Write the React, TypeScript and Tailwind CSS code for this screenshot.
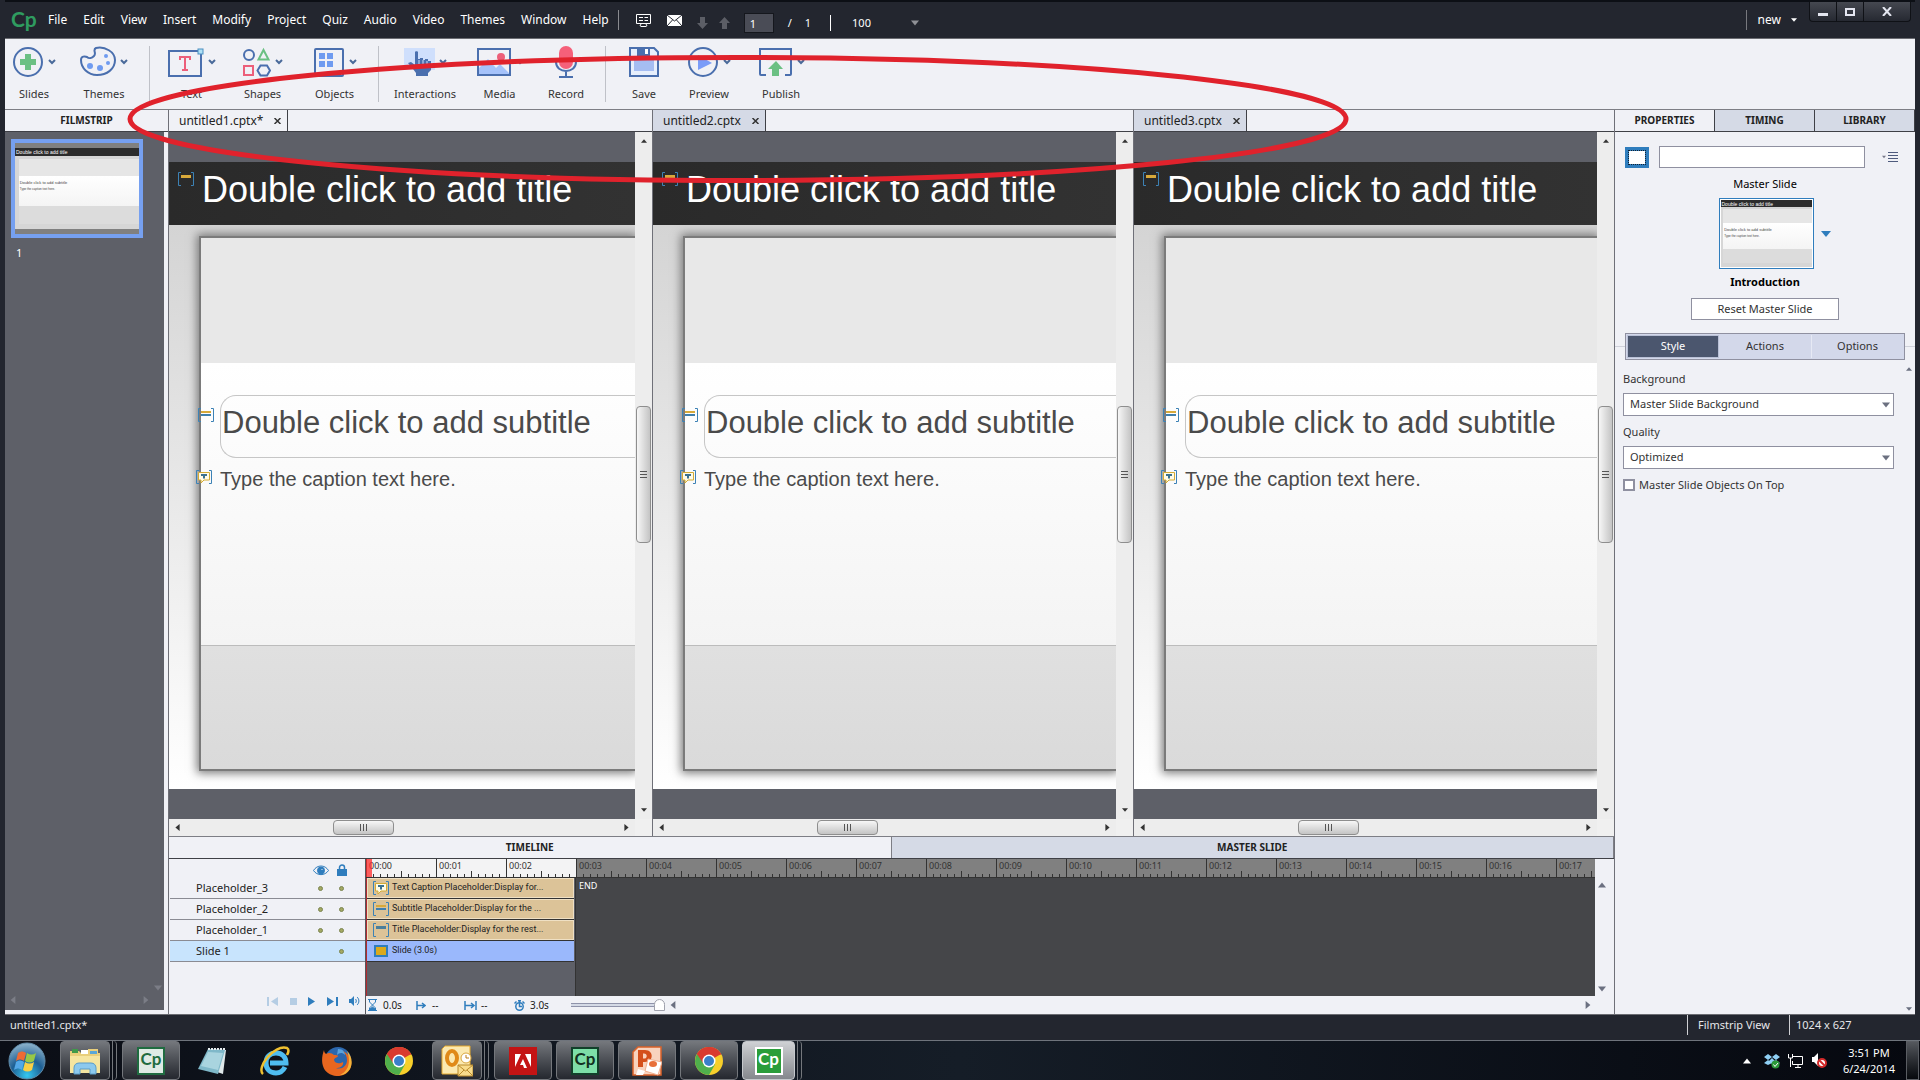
import React, { useState } from 'react';

const menus = ['File', 'Edit', 'View', 'Insert', 'Modify', 'Project', 'Quiz', 'Audio', 'Video', 'Themes', 'Window', 'Help'];

const documents = [
  { name: 'untitled1.cptx*', active: true },
  { name: 'untitled2.cptx', active: false },
  { name: 'untitled3.cptx', active: false },
];

const seconds = Array.from({ length: 18 }, (_, i) => `00:${String(i).padStart(2, '0')}`);

/* ---------- toolbar icons ---------- */

const SlidesIcon = () => (
  <svg className="h-8 w-8" viewBox="0 0 32 32" fill="none">
    <circle cx="16" cy="16" r="14" stroke="#4a6fae" strokeWidth="2" />
    <path d="M13 8h6v5h5v6h-5v5h-6v-5H8v-6h5z" fill="#6bc083" />
  </svg>
);

const ThemesIcon = () => (
  <svg className="h-8 w-9" viewBox="0 0 36 32" fill="none">
    <path
      d="M14 10c3-3-2-6 2-8 9-2 19 4 19 12 0 9-8 15-18 15C8 29 1 22 1 14c0-4 4-4 6-3 2 2 5 1 7-1z"
      stroke="#4a6fae"
      strokeWidth="2"
    />
    <g fill="#6f9bf0">
      <circle cx="10" cy="20" r="3" />
      <circle cx="20" cy="22" r="3" />
      <circle cx="28" cy="17" r="2" />
      <circle cx="26" cy="10" r="2" />
    </g>
  </svg>
);

const TextIcon = () => (
  <svg className="h-8 w-9" viewBox="0 0 36 32" fill="none">
    <rect x="1" y="5" width="32" height="25" stroke="#4a6fae" strokeWidth="2" />
    <path d="M11 10h12v4h-2v-2h-3v11h2v2h-6v-2h2V12h-3v2h-2z" fill="#ec5f7a" />
    <rect x="30" y="3" width="5" height="5" fill="#aee0f5" stroke="#4a8fc0" />
  </svg>
);

const ShapesIcon = () => (
  <svg className="h-8 w-7" viewBox="0 0 28 32" fill="none" strokeWidth="2">
    <circle cx="6" cy="9" r="5" stroke="#4a6fae" />
    <path d="M20.500 4l5 9.500h-10z" stroke="#6bc083" />
    <rect x="1" y="20" width="9" height="9" stroke="#ec5f7a" />
    <path d="M17.500 19.500h6.500l3 5-3 5h-6.500l-3-5z" stroke="#4a6fae" />
  </svg>
);

const ObjectsIcon = () => (
  <svg className="h-8 w-8" viewBox="0 0 32 32" fill="none">
    <rect x="2" y="3" width="28" height="27" rx="1" stroke="#4a6fae" strokeWidth="2" />
    <path d="M6 7h6v6H6zM14 7h6v6h-6zM6 15h6v6H6zM14 15h6v6h-6z" fill="#6f9bf0" />
  </svg>
);

const InteractionsIcon = () => (
  <svg className="h-8 w-8" viewBox="0 0 32 32" fill="none">
    <rect x="1" y="2" width="31" height="22" fill="#cfdffc" />
    <path
      d="M12 6c0-1 3-1 3 0v7h2v-1h3v2h2v-1h3v2h3v9l-3 3v3H13v-3l-3-4-5-6 3-1 4 3z"
      fill="#4a6fae"
    />
    <path d="M16 14v4M20 14v4M24 15v3" stroke="#cfdffc" />
  </svg>
);

const MediaIcon = () => (
  <svg className="h-8 w-9" viewBox="0 0 36 32" fill="none">
    <rect x="2" y="3" width="32" height="26" stroke="#4a6fae" strokeWidth="2" />
    <path d="M3 27V22l9-9 8 9 4-4 9 9v1H3z" fill="#a5c2fa" />
    <circle cx="25" cy="11" r="4" fill="#ec5f7a" />
  </svg>
);

const RecordIcon = () => (
  <svg className="h-8 w-6" viewBox="0 0 24 32" fill="none">
    <rect x="5" y="0" width="14" height="23" rx="7" fill="#f5607a" />
    <path d="M2 14v2c0 12 20 12 20 0v-2M12 25v6M5 31h14" stroke="#4a6fae" strokeWidth="2" />
  </svg>
);

const SaveIcon = () => (
  <svg className="h-8 w-8" viewBox="0 0 32 32" fill="none">
    <path d="M2 2h24l4 4v24H2z" fill="#e7effc" stroke="#4a6fae" strokeWidth="2" />
    <path d="M9 2h13v8H9z" fill="#4a6fae" />
    <path d="M17 3h3v5h-3z" fill="#fff" />
    <path d="M6 14h20v11H6z" fill="#a5bdf2" />
  </svg>
);

const PreviewIcon = () => (
  <svg className="h-8 w-8" viewBox="0 0 32 32" fill="none">
    <circle cx="16" cy="16" r="14" stroke="#4a6fae" strokeWidth="2" />
    <path d="M11 9l14 8-14 7z" fill="#7a9cf8" />
  </svg>
);

const PublishIcon = () => (
  <svg className="h-8 w-9" viewBox="0 0 36 32" fill="none">
    <path d="M9 29H4a1 1 0 01-1-1V3h31v25a1 1 0 01-1 1h-5" stroke="#4a6fae" strokeWidth="2" />
    <path d="M19 15l7 8h-4v7h-7v-7h-4z" fill="#6bc083" />
  </svg>
);

const toolGroups = [
  [
    { label: 'Slides', icon: SlidesIcon, menu: true, width: 'w-[58px]' },
    { label: 'Themes', icon: ThemesIcon, menu: true, width: 'w-[82px]' },
  ],
  [
    { label: 'Text', icon: TextIcon, menu: true, width: 'w-[77px]' },
    { label: 'Shapes', icon: ShapesIcon, menu: true, width: 'w-[65px]' },
    { label: 'Objects', icon: ObjectsIcon, menu: true, width: 'w-[79px]' },
  ],
  [
    { label: 'Interactions', icon: InteractionsIcon, menu: true, width: 'w-[86px]' },
    { label: 'Media', icon: MediaIcon, menu: true, width: 'w-[63px]' },
    { label: 'Record', icon: RecordIcon, menu: false, width: 'w-[70px]' },
  ],
  [
    { label: 'Save', icon: SaveIcon, menu: false, width: 'w-[70px]' },
    { label: 'Preview', icon: PreviewIcon, menu: true, width: 'w-[60px]' },
    { label: 'Publish', icon: PublishIcon, menu: true, width: 'w-[84px]' },
  ],
];

/* ---------- small shared pieces ---------- */

const Triangle = ({ dir, className }: { dir: 'up' | 'down' | 'left' | 'right'; className: string }) => {
  const d = { up: 'M0 8l5-6 5 6z', down: 'M0 2l5 6 5-6z', left: 'M8 0L2 5l6 5z', right: 'M2 0l6 5-6 5z' }[dir];
  return (
    <svg className={className} viewBox="0 0 10 10" fill="currentColor">
      <path d={d} />
    </svg>
  );
};

const PlaceholderIcon = ({ kind, light }: { kind: 'title' | 'subtitle' | 'caption'; light?: boolean }) => (
  <svg className="h-[14px] w-4 shrink-0" viewBox="0 0 16 14" fill="none">
    <path d="M3 .5H.5v13H3M13 .5h2.500v13H13" stroke="#3d82b5" />
    {kind === 'title' && <path d="M3 3h10v3H3z" fill={light ? '#d8a93a' : '#4a7f9c'} />}
    {kind === 'subtitle' && (
      <>
        <path d="M3 3h10v2H3z" fill="#d8a93a" />
        <path d="M3 6h10v2H3z" fill="#3f7fae" />
      </>
    )}
    {kind === 'caption' && (
      <>
        <path d="M2.500 2.500h11v7.500H8l-3 3v-3H2.500z" fill="#fffbe6" stroke="#d3ab35" />
        <path d="M5 4h6v2H9v2.500H7V6H5z" fill="#3a7190" />
      </>
    )}
  </svg>
);

const tracks = [
  { name: 'Placeholder_3', kind: 'caption' as const, text: 'Text Caption Placeholder:Display for...' },
  { name: 'Placeholder_2', kind: 'subtitle' as const, text: 'Subtitle Placeholder:Display for the ...' },
  { name: 'Placeholder_1', kind: 'title' as const, text: 'Title Placeholder:Display for the rest...' },
];

const SlideThumb = () => (
  <div className="flex h-full flex-col bg-[#d6d6d6] font-['Liberation_Sans',sans-serif] text-[#444]">
    <div className="h-[10%] bg-[#2c2c2c] pl-px text-[5px] leading-[8px] text-white">Double click to add title</div>
    <div className="mt-[2%] ml-[3%] h-[22%] bg-[#e6e6e6]" />
    <div className="ml-[3%] flex-1 bg-gradient-to-b from-white to-[#f4f4f4] pt-1 pl-px">
      <p className="text-[4px] leading-[6px]">Double click to add subtitle</p>
      <p className="text-[3px] leading-[6px]">Type the caption text here.</p>
    </div>
    <div className="mb-[4%] ml-[3%] h-[22%] bg-[#dcdcdc]" />
  </div>
);

/* ---------- title bar ---------- */

const TitleBar = () => (
  <header className="flex h-[39px] items-center border-t-2 border-b border-t-[#0c0f15] border-b-[#6b6c72] text-[12px] text-white">
    <span className="w-[43px] pb-1 pl-[6px] font-['Lato',sans-serif] text-[21px] leading-none font-bold text-[#2f9c60]">Cp</span>
    <nav className="flex gap-4">
      {menus.map((m) => (
        <button key={m} type="button">{m}</button>
      ))}
    </nav>
    <span className="ml-[9px] h-5 w-px bg-[#8a8b90]" />
    <svg className="ml-[17px] h-[13px] w-[15px]" viewBox="0 0 15 13" fill="none" stroke="#fff">
      <path d="M.5.5h14v9H.5zM4.500 12.500h6M5 10l-1 2M10 10l1 2" />
      <path d="M3 3.500h4M8.500 3.500H12M3 6.500h4M8.500 6.500H12" />
    </svg>
    <svg className="ml-4 h-[11px] w-[15px]" viewBox="0 0 15 11">
      <path d="M0 0h15v11H0z" fill="#fff" />
      <path d="M0 0l7.500 6L15 0M0 11l5.500-6M15 11L9.500 5" fill="none" stroke="#23262f" />
    </svg>
    <div className="flex items-center pt-[6px] text-[11px]">
      <svg className="ml-[15px] h-3 w-[11px]" viewBox="0 0 11 12" fill="#5c5e66">
        <path d="M3 0h5v6h3l-5.500 6L0 6h3z" />
      </svg>
      <svg className="ml-[11px] h-3 w-[11px]" viewBox="0 0 11 12" fill="#5c5e66">
        <path d="M3 12h5V6h3L5.500 0 0 6h3z" />
      </svg>
      <input
        aria-label="Page"
        defaultValue="1"
        className="ml-[14px] h-[20px] w-[30px] border border-[#15171d] bg-[#4a4c56] pl-[5px] text-white"
      />
      <span className="ml-[14px]">/</span>
      <span className="ml-[13px]">1</span>
      <span className="ml-[19px] h-4 w-px bg-white" />
      <label className="ml-[21px] flex items-center">
        <input aria-label="Zoom" defaultValue="100" className="w-[59px] bg-transparent text-white" />
        <Triangle dir="down" className="h-2 w-2 text-[#8f9096]" />
      </label>
    </div>
    <span className="ml-auto h-5 w-px bg-[#77787e]" />
    <button type="button" className="flex items-center gap-[10px] pl-[11px]">
      new <Triangle dir="down" className="h-[6px] w-[6px]" />
    </button>
    <div className="mr-1 ml-[12px] flex h-[20px] self-start rounded-b border border-t-0 border-[#0f1116] bg-gradient-to-b from-[#454850] to-[#262932]">
      <button type="button" aria-label="Minimize" className="flex w-[27px] items-center justify-center border-r border-[#0f1116]">
        <span className="mt-[6px] h-[3px] w-[10px] bg-[#e4e6f0]" />
      </button>
      <button type="button" aria-label="Maximize" className="flex w-[27px] items-center justify-center border-r border-[#0f1116]">
        <span className="h-2 w-[10px] border-2 border-[#e4e6f0]" />
      </button>
      <button type="button" aria-label="Close" className="flex w-[46px] items-center justify-center">
        <svg className="h-[9px] w-[10px]" viewBox="0 0 10 9" stroke="#e4e6f0" strokeWidth="2">
          <path d="M1 0l8 9M9 0L1 9" />
        </svg>
      </button>
    </div>
  </header>
);

const Toolbar = () => (
  <div className="flex h-[71px] border-b border-[#7d7e85] bg-[#f0f1f6]">
    {toolGroups.map((group, i) => (
      <React.Fragment key={i}>
        {i > 0 && (
          <div className="flex w-2 justify-center py-[7px]">
            <span className="w-px bg-[#bfc1c8]" />
          </div>
        )}
        {group.map((tool) => (
          <button key={tool.label} type="button" className={`${tool.width} flex flex-col items-center gap-2 pt-[7px]`}>
            <span className="flex items-center gap-1">
              <tool.icon />
              {tool.menu && (
                <svg className="h-[6px] w-2" viewBox="0 0 8 6" fill="none" stroke="#4a6a9a" strokeWidth="2">
                  <path d="M1 1l3 3 3-3" />
                </svg>
              )}
            </span>
            <span className="text-[11px] leading-4 text-[#333]">{tool.label}</span>
          </button>
        ))}
      </React.Fragment>
    ))}
  </div>
);

/* ---------- filmstrip ---------- */

const Filmstrip = () => (
  <aside className="flex w-[164px] shrink-0 flex-col border-r border-[#6f7078] bg-[#f0f1f6]">
    <h2 className="h-[22px] border-b border-[#3f4046] text-center text-[10px] leading-[21px] font-bold text-[#222]">FILMSTRIP</h2>
    <div className="mr-1 mb-1 flex flex-1 flex-col bg-[#5e6068] pt-[7px] text-[#7b7d86]">
      <button type="button" aria-label="Slide 1" className="ml-[6px] h-[99px] w-[132px] border-4 border-[#76a0f0] bg-[#808080] py-[5px] text-left">
        <SlideThumb />
      </button>
      <span className="mt-[7px] ml-[11px] text-[11px] leading-4 text-white">1</span>
      <Triangle dir="down" className="mt-auto mr-[2px] h-2 w-2 self-end" />
      <div className="mt-1 mb-[6px] flex justify-between pr-[14px] pl-1">
        <Triangle dir="left" className="h-2 w-2" />
        <Triangle dir="right" className="h-2 w-2" />
      </div>
    </div>
  </aside>
);

/* ---------- documents ---------- */

const Slide = () => (
  <div className="flex h-[627px] flex-col font-['Liberation_Sans',sans-serif] whitespace-nowrap">
    <div className="flex h-[63px] shrink-0 gap-2 bg-gradient-to-r from-[#2a2a2a] to-[#323232] pl-[9px]">
      <span className="pt-[10px]">
        <PlaceholderIcon kind="title" light />
      </span>
      <p className="text-[36px] leading-[56px] text-white">Double click to add title</p>
    </div>
    <div className="flex-1 bg-gradient-to-b from-[#d4d4d4] to-white pt-[11px] pb-[18px] pl-[30px]">
      <div className="flex h-full flex-col border-2 border-r-0 border-[#7b7b7b] shadow-[0_0_9px_2px_#777]">
        <div className="h-[125px] bg-[#e8e8e8]" />
        <div className="flex-1 bg-gradient-to-b from-white to-[#f4f4f4] pt-[32px] text-[#4a4a4a]">
          <div className="-ml-[3px] flex gap-[6px]">
            <span className="pt-[13px]">
              <PlaceholderIcon kind="subtitle" />
            </span>
            <p className="h-[63px] flex-1 rounded-l-2xl border border-r-0 border-[#c6c6c6] pl-px text-[31px] leading-[54px]">
              Double click to add subtitle
            </p>
          </div>
          <div className="mt-[4px] -ml-[5px] flex gap-2">
            <span className="pt-[8px]">
              <PlaceholderIcon kind="caption" />
            </span>
            <p className="text-[20px] leading-[34px]">Type the caption text here.</p>
          </div>
        </div>
        <div className="h-[124px] border-t border-[#bcbcbc] bg-gradient-to-b from-[#e0e0e0] to-[#dadada]" />
      </div>
    </div>
  </div>
);

const DocumentPane = ({ name, active, last }: { name: string; active: boolean; last: boolean }) => (
  <section className={`flex min-w-0 flex-col ${last ? '' : 'border-r border-[#6f7078]'}`}>
    <div className="flex h-[22px] border-b border-[#3f4046]">
      <div className={`flex items-center border-r border-[#3f4046] pr-[6px] pl-[10px] text-[12px] text-[#222] ${active ? '' : 'bg-[#d5dae6]'}`}>
        <button type="button">{name}</button>
        <button type="button" aria-label={`Close ${name}`} className="ml-[11px]">
          <svg className="h-[6px] w-[7px]" viewBox="0 0 7 6" stroke="#333" strokeWidth="1.500">
            <path d="M.5 0l6 6M6.500 0l-6 6" />
          </svg>
        </button>
      </div>
    </div>
    <div className="grid flex-1 grid-cols-[minmax(0,1fr)_17px] grid-rows-[1fr_17px]">
      <div className="overflow-hidden bg-[#5e6068] py-[30px]">
        <Slide />
      </div>
      <div className="flex flex-col items-center bg-[#ededed] py-[6px] text-[#333]">
        <Triangle dir="up" className="h-[6px] w-[6px]" />
        <div className="mt-[262px] flex h-[137px] w-[15px] items-center justify-center rounded-sm border border-[#8e8e8e] bg-gradient-to-r from-[#f7f7f7] to-[#c4c4c4]">
          <span className="h-2 w-[7px] bg-[repeating-linear-gradient(180deg,#555_0_1px,transparent_1px_3px)]" />
        </div>
        <Triangle dir="down" className="mt-auto h-[6px] w-[6px]" />
      </div>
      <div className="flex items-center bg-[#ededed] px-[5px] text-[#333]">
        <Triangle dir="left" className="h-[7px] w-[7px]" />
        <div className="ml-[152px] flex h-[15px] w-[61px] items-center justify-center rounded-sm border border-[#8e8e8e] bg-gradient-to-b from-[#f7f7f7] to-[#c4c4c4]">
          <span className="h-[7px] w-2 bg-[repeating-linear-gradient(90deg,#555_0_1px,transparent_1px_3px)]" />
        </div>
        <Triangle dir="right" className="ml-auto h-[7px] w-[7px]" />
      </div>
      <div className="bg-[#f0f0f0]" />
    </div>
  </section>
);

/* ---------- timeline ---------- */

const Dot = () => <span className="h-[5px] w-[5px] rounded-full border border-[#7a8550] bg-[#a3a862]" />;

const Ruler = () => (
  <div className="relative flex h-[19px] overflow-hidden border-b border-[#333] bg-[#808080]">
    {seconds.map((s, i) => (
      <div key={s} className={`relative h-full w-[70px] shrink-0 border-l border-[#333] ${i < 3 ? 'bg-[#f3f3f4]' : ''}`}>
        <span className="block pl-[2px] text-[9px] leading-[13px] text-[#333]">{s}</span>
        <span className="absolute bottom-0 left-[-1px] h-[3px] w-full bg-[repeating-linear-gradient(90deg,#333_0_1px,transparent_1px_7px)]" />
        <span className="absolute bottom-0 left-[34px] h-[6px] w-px bg-[#333]" />
      </div>
    ))}
    <span className="absolute top-0 left-0 h-full w-[6px] bg-[#ff2b2b]/75" />
  </div>
);

const Timeline = () => (
  <section className="border-t border-[#7d7e85]">
    <div className="flex h-[22px] border-b border-[#3f4046] text-[10px] font-bold text-[#222]">
      <button type="button" className="flex-1 border-r border-[#7d7e85]">TIMELINE</button>
      <button type="button" className="flex-1 border-r border-[#7d7e85] bg-[#d5dae6]">MASTER SLIDE</button>
    </div>
    <div className="flex h-[155px]">
      <div className="flex w-[197px] shrink-0 flex-col border-r border-[#55565c] text-[11px] text-[#222]">
        <div className="flex h-[19px] items-center pt-[3px] pl-[144px] text-[#2f7dbd]">
          <svg className="h-[11px] w-4" viewBox="0 0 16 11" fill="none" stroke="currentColor">
            <path d="M.5 5.500C4-.5 12-.5 15.500 5.500 12 11 4 11 .5 5.500z" />
            <circle cx="8" cy="5.500" r="3.500" fill="currentColor" />
            <circle cx="9" cy="4.500" r=".6" fill="#fff" stroke="none" />
          </svg>
          <svg className="ml-2 h-3 w-[10px]" viewBox="0 0 10 12">
            <path d="M2.500 5V3.500a2.500 2.500 0 015 0V5" fill="none" stroke="currentColor" strokeWidth="1.500" />
            <path d="M0 5h10v7H0z" fill="currentColor" />
          </svg>
        </div>
        {tracks.map((t) => (
          <div key={t.name} className="ml-px flex h-[21px] items-center border-b border-[#8a8b93] pl-[26px]">
            <span className="w-[122px]">{t.name}</span>
            <Dot />
            <span className="w-4" />
            <Dot />
          </div>
        ))}
        <div className="ml-px flex h-[21px] items-center border-b border-[#8a8b93] bg-[#c8e4fd] pl-[26px]">
          <span className="w-[143px]">Slide 1</span>
          <Dot />
        </div>
        <div className="mt-auto mb-2 flex items-center gap-[11px] self-end pr-[5px] text-[#2f7dbd]">
          <button type="button" aria-label="Rewind" className="opacity-30">
            <svg className="h-[9px] w-3" viewBox="0 0 12 9" fill="currentColor"><path d="M0 0h2v9H0zM11 0v9L4 4.500z" /></svg>
          </button>
          <button type="button" aria-label="Stop" className="opacity-30">
            <svg className="h-[7px] w-[7px]" viewBox="0 0 7 7" fill="currentColor"><path d="M0 0h7v7H0z" /></svg>
          </button>
          <button type="button" aria-label="Play">
            <svg className="h-[9px] w-[7px]" viewBox="0 0 7 9" fill="currentColor"><path d="M0 0l7 4.500L0 9z" /></svg>
          </button>
          <button type="button" aria-label="Go to end">
            <svg className="h-[9px] w-3" viewBox="0 0 12 9" fill="currentColor"><path d="M10 0h2v9h-2zM1 0v9l7-4.500z" /></svg>
          </button>
          <button type="button" aria-label="Audio">
            <svg className="h-[10px] w-[11px]" viewBox="0 0 11 10" fill="currentColor">
              <path d="M0 3h2l3-3v10L2 7H0z" />
              <path d="M6.500 3c1 1 1 3 0 4M8 1c2.500 2 2.500 6 0 8" fill="none" stroke="currentColor" />
            </svg>
          </button>
        </div>
      </div>
      <div className="flex min-w-0 flex-1 flex-col">
        <Ruler />
        <div className="flex flex-1 bg-[#454649]">
          <div className="w-[210px] shrink-0 border-r border-l border-r-[#333] border-l-[#b02a30] bg-[#5e6068] font-['Roboto',sans-serif] text-[9px] text-[#222]">
            {tracks.map((t) => (
              <div key={t.name} className="mr-px flex h-[21px] items-center border-b border-b-[#333] bg-[#dcc398] pl-[6px] shadow-[inset_0_0_0_1px_#efe0c4]">
                <PlaceholderIcon kind={t.kind} />
                <span className="pl-[3px] whitespace-nowrap">{t.text}</span>
              </div>
            ))}
            <div className="mr-px flex h-[21px] items-center border-b border-b-[#333] bg-[#9ab8fc] pl-[7px]">
              <span className="h-3 w-[14px] border-2 border-[#2f7dbd] bg-[#dba91c]" />
              <span className="pl-1">Slide (3.0s)</span>
            </div>
          </div>
          <span className="pt-[2px] pl-[3px] text-[9px] leading-3 text-white">END</span>
        </div>
        <div className="flex h-[18px] items-center pl-[2px] text-[10px] text-[#222]">
          <svg className="h-3 w-[9px]" viewBox="0 0 9 12" fill="none" stroke="#2f7dbd">
            <path d="M0 .5h9M0 11.500h9M1.500 1v2l3 3 3-3V1M1.500 11V9l3-3 3 3v2" />
            <path d="M2 10l2.500-2L7 10v1H2z" fill="#2f7dbd" />
          </svg>
          <span className="w-[39px] pl-[6px]">0.0s</span>
          <svg className="h-[9px] w-[10px]" viewBox="0 0 10 9" fill="none" stroke="#2f7dbd" strokeWidth="1.500">
            <path d="M1 0v9M1 4.500h8M6 2l3 2.500L6 7" />
          </svg>
          <span className="w-[38px] pl-[6px]">--</span>
          <svg className="h-[9px] w-[13px]" viewBox="0 0 13 9" fill="none" stroke="#2f7dbd" strokeWidth="1.500">
            <path d="M1 0v9M12 0v9M1 4.500h9M7 2l3 2.500L7 7" />
          </svg>
          <span className="w-[37px] pl-1">--</span>
          <svg className="h-[11px] w-[11px]" viewBox="0 0 11 11" fill="none" stroke="#2f7dbd" strokeWidth="1.500">
            <circle cx="5.500" cy="6.500" r="3.700" />
            <path d="M4 .8h3M5.500 1v5.500H8M.5 3.500l2-2M10.500 3.500l-2-2" />
          </svg>
          <span className="w-[46px] pl-[5px]">3.0s</span>
          <input
            type="range"
            aria-label="Zoom timeline"
            defaultValue="100"
            className="h-3 w-[94px] appearance-none bg-[linear-gradient(180deg,transparent_0_4px,#8f93aa_4px_5px,#d5dae6_5px_7px,#8f93aa_7px_8px,transparent_8px)] [&::-webkit-slider-thumb]:h-3 [&::-webkit-slider-thumb]:w-[11px] [&::-webkit-slider-thumb]:appearance-none [&::-webkit-slider-thumb]:rounded-t-full [&::-webkit-slider-thumb]:border [&::-webkit-slider-thumb]:border-[#a0a2ad] [&::-webkit-slider-thumb]:bg-white"
          />
          <Triangle dir="left" className="ml-1 h-2 w-2 text-[#6b7080]" />
          <Triangle dir="right" className="mr-[3px] ml-auto h-2 w-2 text-[#6b7080]" />
        </div>
      </div>
      <div className="flex w-[19px] shrink-0 flex-col justify-between pt-[22px] pb-[21px] pl-[3px] text-[#6b7080]">
        <Triangle dir="up" className="h-2 w-2" />
        <Triangle dir="down" className="h-2 w-2" />
      </div>
    </div>
  </section>
);

/* ---------- properties ---------- */

const SelectField = ({ label, value }: { label: string; value: string }) => (
  <label className="block">
    <span className="block pb-[6px] leading-4">{label}</span>
    <span className="relative mb-2 block">
      <select className="block h-[23px] w-full appearance-none border border-[#8f90a0] bg-white pl-[6px]">
        <option>{value}</option>
      </select>
      <Triangle dir="down" className="pointer-events-none absolute top-2 right-1 h-2 w-2 text-[#6b7080]" />
    </span>
  </label>
);

const Properties = () => {
  const [onTop, setOnTop] = useState(false);

  return (
    <aside className="flex w-[301px] shrink-0 flex-col border-l border-[#6f7078] text-[11px] text-[#333]">
      <div className="grid h-[22px] grid-cols-3 border-b border-[#3f4046] text-[10px] font-bold text-[#222]">
        <button type="button" className="border-r border-[#3f4046]">PROPERTIES</button>
        <button type="button" className="border-r border-[#3f4046] bg-[#d5dae6]">TIMING</button>
        <button type="button" className="border-r border-[#3f4046] bg-[#d5dae6]">LIBRARY</button>
      </div>
      <div className="flex items-center pt-[14px] pl-[10px]">
        <span className="h-[21px] w-6 border-4 border-[#2f7dbd] bg-white outline-1 -outline-offset-4 outline-dotted outline-[#123]" />
        <input aria-label="Name" className="ml-[10px] h-[22px] w-[206px] border border-[#8f90a0] bg-white px-1" />
        <button type="button" aria-label="Panel menu" className="ml-[17px] flex items-start gap-[2px] text-[#77798a]">
          <Triangle dir="down" className="mt-[3px] h-1 w-1" />
          <span className="h-[10px] w-[10px] bg-[repeating-linear-gradient(180deg,#4f5b7d_0_1px,transparent_1px_3px)]" />
        </button>
      </div>
      <div className="flex flex-col items-center text-black">
        <span className="pt-2 leading-4">Master Slide</span>
        <div className="mt-[6px] ml-[19px] flex items-center gap-[7px]">
          <div className="h-[71px] w-[95px] border border-[#2f7dbd] bg-white p-px">
            <SlideThumb />
          </div>
          <Triangle dir="down" className="h-[10px] w-[10px] text-[#2f7dbd]" />
        </div>
        <strong className="pt-[5px] leading-4">Introduction</strong>
        <button type="button" className="mt-2 h-[22px] w-[148px] border border-[#8f90a0] bg-white text-[#333]">Reset Master Slide</button>
      </div>
      <div className="mt-[13px] flex items-center">
        <span className="h-px w-[10px] bg-[#cfd1da]" />
        <div className="grid h-[27px] flex-1 grid-cols-3 border border-[#8f90a0] bg-[#d3d8ea] p-px">
          <button type="button" className="border border-[#b9c0d6] bg-[#4b566e] text-white">Style</button>
          <button type="button">Actions</button>
          <button type="button" className="border-l border-[#e6e9f4]">Options</button>
        </div>
        <span className="h-px w-[10px] bg-[#cfd1da]" />
      </div>
      <Triangle dir="up" className="mt-[6px] mr-[3px] h-[6px] w-[6px] self-end text-[#6b7080]" />
      <div className="-mt-px pr-[21px] pl-2">
        <SelectField label="Background" value="Master Slide Background" />
        <SelectField label="Quality" value="Optimized" />
        <label className="flex items-center gap-1 leading-4">
          <input
            type="checkbox"
            checked={onTop}
            onChange={(e) => setOnTop(e.target.checked)}
            className="h-3 w-3 appearance-none border-2 border-[#8f90a0] bg-white checked:bg-[#4b566e]"
          />
          Master Slide Objects On Top
        </label>
      </div>
      <Triangle dir="down" className="mt-auto mr-[3px] mb-[2px] h-[6px] w-[6px] self-end text-[#6b7080]" />
    </aside>
  );
};

/* ---------- desktop taskbar ---------- */

const CaptivateIcon = ({ className }: { className: string }) => (
  <span className={`${className} flex h-7 w-7 items-center justify-center border-2 pb-1 font-['Lato',sans-serif] text-[17px] leading-none font-bold`}>
    Cp
  </span>
);

const ChromeIcon = () => (
  <svg className="h-7 w-7" viewBox="0 0 28 28">
    <circle cx="14" cy="14" r="14" fill="#f7cf2b" />
    <path d="M14 14L1.900 7A14 14 0 0126.100 7z" fill="#d93a2f" />
    <path d="M1.900 7A14 14 0 0014 28l6-10.500L14 14z" fill="#4faf4c" />
    <path d="M14 7.500h12.400A14 14 0 001.900 7L8 16z" fill="#d93a2f" />
    <circle cx="14" cy="14" r="6.500" fill="#fff" />
    <circle cx="14" cy="14" r="5" fill="#3a7fc8" />
  </svg>
);

const ExplorerIcon = () => (
  <svg className="h-7 w-8" viewBox="0 0 32 28">
    <path d="M1 4h9l2 2h7V2h10v4h2v20H1z" fill="#e9cf7c" />
    <path d="M3 2h6v4H3z" fill="#3f9a4a" />
    <path d="M12 3h7v4h-7z" fill="#fff" />
    <path d="M21 4h7v3h-7z" fill="#5aa7d8" />
    <path d="M1 9h30v17H1z" fill="#f5e5a0" />
    <path d="M5 27v-6c0-3 2-5 5-5h12c3 0 5 2 5 5v6h-6v-5H11v5z" fill="#8cc9ee" stroke="#5a9cc8" />
  </svg>
);

const NotepadIcon = () => (
  <svg className="h-7 w-[30px]" viewBox="0 0 30 28">
    <path d="M10 2l18 1-3 24-6-2z" fill="#dfe8ea" />
    <path d="M10 2l17 1-7 24L0 22z" fill="#7fb8c9" />
    <path d="M10 5l15 1-5 17L3 19z" fill="#a9d4df" />
    <path d="M10 2h17" stroke="#e8eef0" strokeWidth="2" strokeDasharray="2 1" />
  </svg>
);

const ExplorerEIcon = () => (
  <svg className="h-[30px] w-[30px]" viewBox="0 0 30 30" fill="none">
    <path d="M25 21c-2 4-6 6-9 6-6 0-10-4-10-10S10 7 16 7s10 4 10 10H10" stroke="#4fbdf0" strokeWidth="5" />
    <path d="M3 28C-4 22 14-2 27 2c3 2 1 5 0 7" stroke="#efc030" strokeWidth="2.500" />
  </svg>
);

const FirefoxIcon = () => (
  <svg className="h-[30px] w-[30px]" viewBox="0 0 30 30">
    <circle cx="16" cy="14" r="13" fill="#2c67ad" />
    <path d="M16 3c5 0 7 3 7 6-3-3-6-2-8 0z" fill="#5ba3dd" />
    <path d="M2 4c0 2 1 3 2 4 3-2 6-1 8 1 2 0 4 0 4 1s-4 2-4 4c1 4 6 4 9 2 1 4-3 6-7 6 6 2 11-2 11-8 0-4-2-7-4-9 8 4 10 12 7 18-4 8-15 9-22 4C-1 22-1 12 2 4z" fill="#e8661f" />
    <path d="M25 5c5 5 6 12 3 18-3 4-6 6-10 6 9-4 11-14 7-24z" fill="#f4b23a" />
  </svg>
);

const OutlookIcon = () => (
  <svg className="h-8 w-8" viewBox="0 0 32 32">
    <path d="M4 1h25v28H1V4z" fill="#fbe9b0" stroke="#e5a92c" />
    <ellipse cx="11" cy="13" rx="5" ry="7" fill="none" stroke="#e08a18" strokeWidth="4" />
    <circle cx="25" cy="13" r="5" fill="#fff" stroke="#d9a63c" />
    <path d="M25 10v3h3" fill="none" stroke="#b97b18" />
    <path d="M17 20h15v11H17z" fill="#f8dc8c" stroke="#b98a2c" />
    <path d="M17 20l7.500 6 7.500-6M17 31l6-6M32 31l-6-6" fill="none" stroke="#b98a2c" />
  </svg>
);

const AdobeIcon = () => (
  <svg className="h-7 w-7" viewBox="0 0 28 28">
    <path d="M0 0h28v28H0z" fill="#c41414" />
    <path d="M6 7h6L6 20zM16 7h6v13zM14 12l4 9h-3l-1-3h-3z" fill="#fff" />
  </svg>
);

const PowerPointIcon = () => (
  <svg className="h-[30px] w-[30px]" viewBox="0 0 30 30">
    <path d="M6 1h23v28H1V6z" fill="#f8d3be" stroke="#d9622a" strokeWidth="1.500" />
    <path d="M6 4h7c9 0 9 12 0 12h-2v5H6zM11 7.500v5c5 1 5-6 0-5z" fill="#d4501c" fillRule="evenodd" />
    <path d="M16 13l14 3-4 13-13-4z" fill="#fff" stroke="#f0b090" />
    <ellipse cx="21" cy="18" rx="4" ry="3" fill="#e8703a" />
    <path d="M6 23l7 2-2 4H4z" fill="#fff" />
  </svg>
);

const StartIcon = () => (
  <svg className="h-[38px] w-[38px]" viewBox="0 0 38 38">
    <defs>
      <radialGradient id="orb" cx=".5" cy=".9" r=".9">
        <stop offset="0" stopColor="#35c8f0" />
        <stop offset=".5" stopColor="#1d5f94" />
        <stop offset="1" stopColor="#8fb4cc" />
      </radialGradient>
    </defs>
    <circle cx="19" cy="19" r="18" fill="url(#orb)" stroke="#5f8aa8" />
    <path d="M10 11c3-2 5-2 8 0l-2 8c-3-2-5-2-8 0z" fill="#ee6a34" />
    <path d="M19 11c3 2 6 2 9 0l-2 8c-3 2-6 2-9 0z" fill="#97c847" />
    <path d="M8 20c3-2 5-2 8 0l-2 8c-3-2-5-2-8 0z" fill="#53a8e8" />
    <path d="M17 20c3 2 6 2 9 0l-2 8c-3 2-6 2-9 0z" fill="#f9cf45" />
  </svg>
);

const taskButtons = [
  { name: 'Explorer', open: true, stacked: true, icon: ExplorerIcon, size: 'w-[50px]' },
  { name: 'Captivate', open: true, icon: () => <CaptivateIcon className="border-[#1f6b40] bg-[#dfeae4] text-[#1f6b40]" />, size: 'ml-[5px] w-[58px]' },
  { name: 'Notepad', icon: NotepadIcon, size: 'ml-1 w-[58px]' },
  { name: 'Internet Explorer', icon: ExplorerEIcon, size: 'ml-1 w-[58px]' },
  { name: 'Firefox', icon: FirefoxIcon, size: 'ml-1 w-[58px]' },
  { name: 'Chrome', icon: ChromeIcon, size: 'ml-1 w-[58px]' },
  { name: 'Outlook', open: true, stacked: true, icon: OutlookIcon, size: 'ml-1 w-[50px]' },
  { name: 'Adobe Application Manager', open: true, icon: AdobeIcon, size: 'ml-[5px] w-[58px]' },
  { name: 'Captivate 7', open: true, icon: () => <CaptivateIcon className="border-[#12402a] bg-[#7ddfa8] text-[#12301f]" />, size: 'ml-1 w-[58px]' },
  { name: 'PowerPoint', open: true, icon: PowerPointIcon, size: 'ml-1 w-[58px]' },
  { name: 'Chrome window', open: true, icon: ChromeIcon, size: 'ml-1 w-[58px]' },
  { name: 'Captivate 8', open: true, current: true, stacked: true, icon: () => <CaptivateIcon className="border-white bg-[#2a9d3a] text-white" />, size: 'ml-1 w-[53px]' },
];

const Taskbar = () => (
  <footer className="flex h-[40px] items-stretch border-t border-[#6f747c] bg-gradient-to-r from-[#0b0e16] via-[#151d27] to-[#06080f] text-white">
    <button type="button" aria-label="Start" className="ml-2 w-[52px]">
      <StartIcon />
    </button>
    {taskButtons.map((b) => (
      <React.Fragment key={b.name}>
        <button
          type="button"
          aria-label={b.name}
          className={`${b.size} flex items-center justify-center rounded-sm ${
            b.current
              ? 'border border-[#c5c8cc] bg-gradient-to-b from-[#cfd1d4] to-[#85888d]'
              : b.open
                ? 'border border-[#74777c] bg-gradient-to-b from-[#74777c] to-[#25282f]'
                : ''
          }`}
        >
          <b.icon />
        </button>
        {b.stacked && <span className="ml-[2px] w-[5px] rounded-r-sm border-r border-l border-[#74777c]" />}
      </React.Fragment>
    ))}
    <div className="ml-auto flex items-center">
      <Triangle dir="up" className="h-2 w-2" />
      <svg className="ml-[13px] h-4 w-4" viewBox="0 0 16 16">
        <path d="M4 1l4 3-4 3-4-3zM12 1l4 3-4 3-4-3zM4 7l4 3-4 2-4-2zM12 7l4 3-4 2-4-2zM8 5l3 3-3 3-3-3z" fill="#8fd0f5" />
        <circle cx="11.500" cy="11.500" r="4" fill="#2a9a3a" />
        <path d="M9.500 11.500l1.500 2 3-3.500" fill="none" stroke="#fff" />
      </svg>
      <svg className="ml-2 h-[14px] w-[15px]" viewBox="0 0 15 14" fill="none" stroke="#fff">
        <path d="M5 2.500h9.500v8H4.500V7M7 13.500h6M10 11v2M.5 0v4h4V0M2.500 4v9" />
      </svg>
      <svg className="ml-[9px] h-[15px] w-[15px]" viewBox="0 0 15 15">
        <path d="M0 4h2l4-4v13L2 9H0z" fill="#fff" />
        <circle cx="10" cy="10" r="4" fill="#fff" stroke="#d22a2a" strokeWidth="2" />
        <path d="M7 7l6 6" stroke="#d22a2a" strokeWidth="2" />
      </svg>
      <div className="ml-[5px] w-[74px] text-center text-[11px] leading-4">
        <p>3:51 PM</p>
        <p>6/24/2014</p>
      </div>
      <button type="button" aria-label="Show desktop" className="mr-px h-full w-[13px] border border-[#5a5d63] bg-gradient-to-b from-[#55585e] to-[#07090d]" />
    </div>
  </footer>
);

export default function App() {
  return (
    <div className="relative flex min-h-screen flex-col overflow-hidden bg-[#23262f] font-['Noto_Sans',sans-serif]">
      <div className="flex flex-1 flex-col px-[5px]">
        <TitleBar />
        <Toolbar />
        <main className="flex flex-1 border-b border-[#6b6c72] bg-[#f0f1f6]">
          <Filmstrip />
          <div className="flex min-w-0 flex-1 flex-col">
            <div className="grid flex-1 grid-cols-[484fr_481fr_480fr]">
              {documents.map((doc, i) => (
                <DocumentPane key={doc.name} name={doc.name} active={doc.active} last={i === documents.length - 1} />
              ))}
            </div>
            <Timeline />
          </div>
          <Properties />
        </main>
        <div className="flex h-[25px] items-start text-[11px] text-[#e6e7ea]">
          <span className="pt-[2px] pl-[5px] leading-4">untitled1.cptx*</span>
          <span className="ml-auto h-5 w-px bg-[#cfd0d4]" />
          <span className="w-[101px] pt-[2px] pl-[10px] leading-4">Filmstrip View</span>
          <span className="h-5 w-px bg-[#cfd0d4]" />
          <span className="w-[125px] pt-[2px] pl-[6px] leading-4">1024 x 627</span>
        </div>
      </div>
      <Taskbar />

      {/* hand-drawn highlight around the document tabs */}
      <svg className="pointer-events-none absolute top-[54px] left-[127px] h-[130px] w-[1222px]" viewBox="0 0 1222 130" fill="none">
        <ellipse cx="611" cy="65" rx="608" ry="61.500" stroke="#e0222c" strokeWidth="5" />
      </svg>
    </div>
  );
}
